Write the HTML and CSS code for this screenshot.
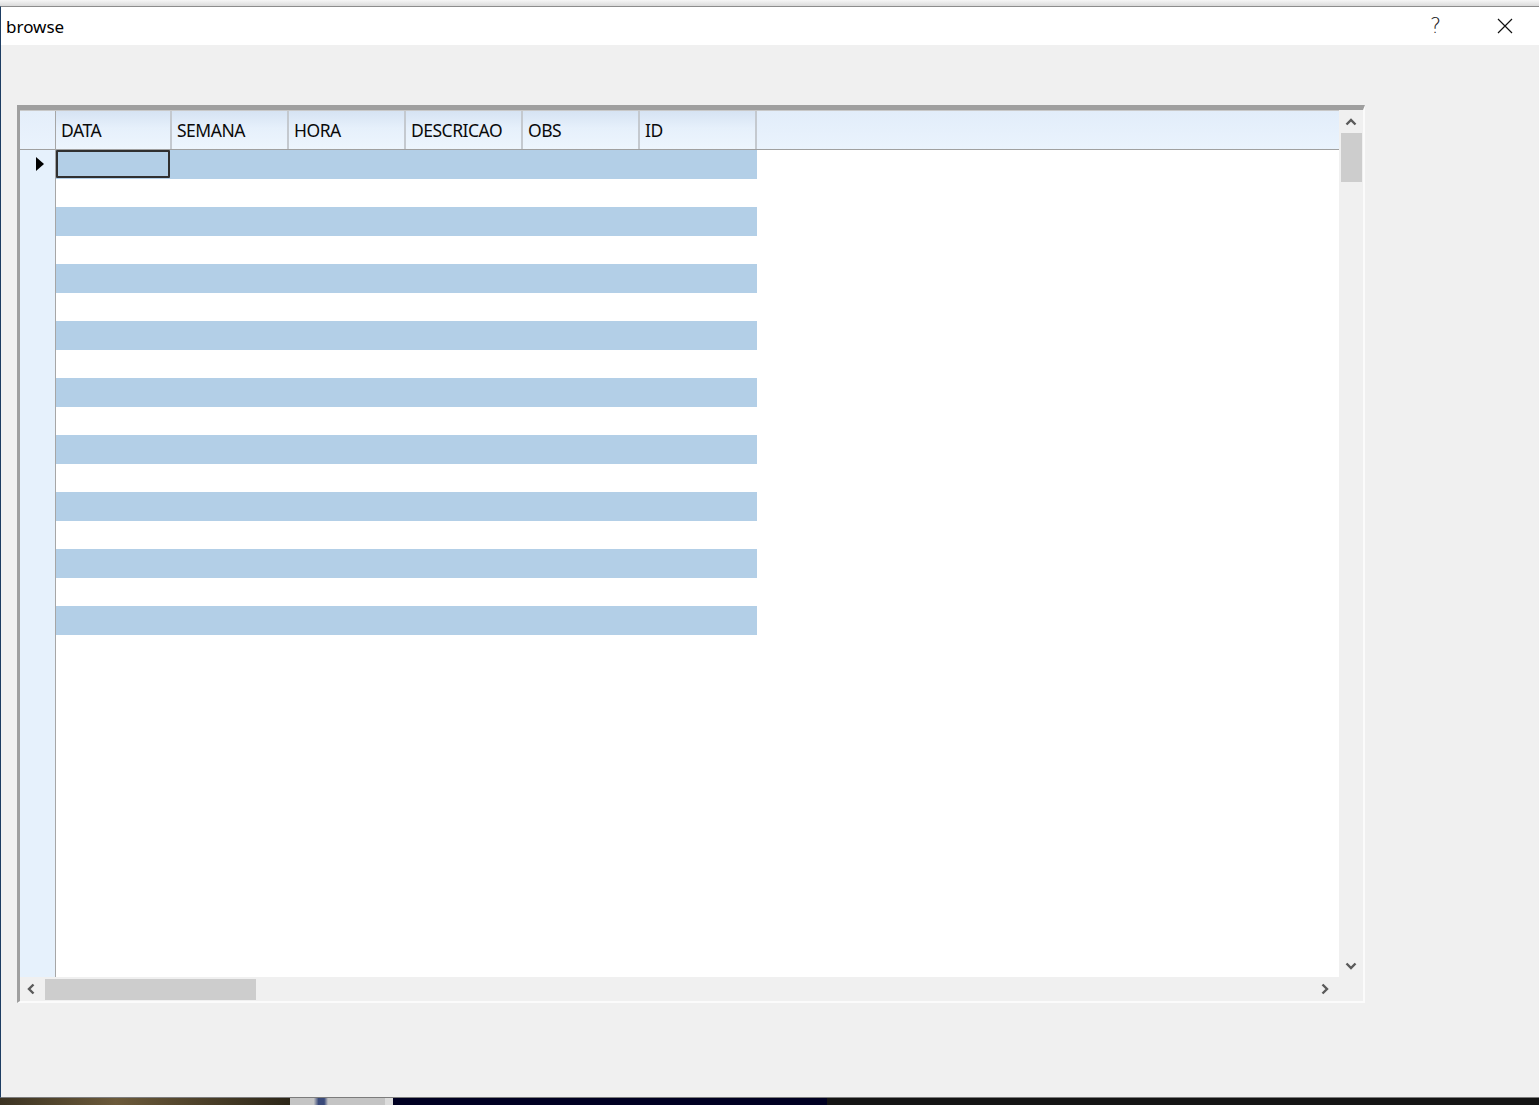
FILE: index.html
```html
<!DOCTYPE html>
<html lang="pt">
<head>
  <meta charset="UTF-8" />
  <title>browse</title>
  <link rel="stylesheet" href="styles.css">
</head>
<body>
  <div class="desk-strip"></div>

  <div class="window">
    <div class="titlebar">
      <span class="title">browse</span>
      <div class="caption-buttons">
        <span class="cap-btn help">?</span>
        <span class="cap-btn close">
          <svg width="16" height="16" viewBox="0 0 16 16"><path d="M1 1 L15 15 M15 1 L1 15" stroke="#111" stroke-width="1.2" fill="none"/></svg>
        </span>
      </div>
    </div>

    <div class="client">
      <div class="grid">
        <div class="grid-body">
          <div class="row-headers">
            <div class="corner"></div>
            <div class="current-marker">
              <svg width="10" height="16" viewBox="0 0 10 16"><path d="M1 1 L9 8 L1 15 Z" fill="#000"/></svg>
            </div>
          </div>
          <div class="cells">
            <div class="col-headers">
              <div class="col-head">DATA</div>
              <div class="col-head">SEMANA</div>
              <div class="col-head">HORA</div>
              <div class="col-head">DESCRICAO</div>
              <div class="col-head">OBS</div>
              <div class="col-head">ID</div>
            </div>
            <div class="rows" id="rows"></div>
          </div>
        </div>

        <!-- vertical scrollbar -->
        <div class="vscroll">
          <span class="arrow">
            <svg width="12" height="8" viewBox="0 0 12 8"><path d="M1.5 6.5 L6 2 L10.5 6.5" stroke="#5a5a5a" stroke-width="2.4" fill="none"/></svg>
          </span>
          <div class="vthumb"></div>
          <div class="track"></div>
          <span class="arrow">
            <svg width="12" height="8" viewBox="0 0 12 8"><path d="M1.5 1.5 L6 6 L10.5 1.5" stroke="#5a5a5a" stroke-width="2.4" fill="none"/></svg>
          </span>
        </div>

        <!-- horizontal scrollbar -->
        <div class="hscroll">
          <span class="arrow">
            <svg width="8" height="12" viewBox="0 0 8 12"><path d="M6.5 1.5 L2 6 L6.5 10.5" stroke="#5a5a5a" stroke-width="2.4" fill="none"/></svg>
          </span>
          <div class="hthumb"></div>
          <div class="track"></div>
          <span class="arrow">
            <svg width="8" height="12" viewBox="0 0 8 12"><path d="M1.5 1.5 L6 6 L1.5 10.5" stroke="#5a5a5a" stroke-width="2.4" fill="none"/></svg>
          </span>
        </div>
        <div class="scroll-corner"></div>
      </div>
    </div>
  </div>

  <div class="taskbar">
    <div class="tb-a"></div>
    <div class="tb-b"></div>
    <div class="tb-c"></div>
    <div class="tb-d"></div>
    <div class="tb-e"></div>
  </div>

  <script>
    // 18 empty records, every other one selected-blue
    const rows = document.getElementById("rows");
    for (let i = 0; i < 18; i++) {
      const row = document.createElement("div");
      row.className = i % 2 === 0 ? "row blue" : "row";
      if (i === 0) {
        const cell = document.createElement("div");
        cell.className = "current-cell";
        row.appendChild(cell);
      }
      rows.appendChild(row);
    }
  </script>
</body>
</html>
```

FILE: styles.css
```css
html, body {
  margin: 0;
  height: 1105px;
  overflow: hidden;
}

body {
  font-family: 'Noto Sans', 'Open Sans', sans-serif;
  background-color: #e9e9e9;
  color: #000;
}

.desk-strip {
  height: 6px;
  background: linear-gradient(#f6f6f6, #dadada);
}

.window {
  border-top: 1px solid #8c8c8c;
  border-left: 1px solid #1d3d63;
  border-bottom: 1px solid #7c7c7c;
  background-color: #f0f0f0;
}

.titlebar {
  height: 38px;
  background-color: #fff;
  display: flex;
  justify-content: space-between;
  align-items: center;
}

.title {
  font-size: 17px;
  padding-left: 5px;
  padding-top: 1px;
}

.caption-buttons {
  display: flex;
  height: 100%;
}

.cap-btn {
  width: 69px;
  display: flex;
  align-items: center;
  justify-content: center;
}

.help {
  font-size: 21px;
  color: #222;
  font-family: 'DejaVu Sans', sans-serif;
  font-weight: 300;
}

.client {
  height: 1052px;
  padding: 60px 0 0 16px;
  box-sizing: border-box;
}

.grid {
  width: 1348px;
  height: 898px;
  box-sizing: border-box;
  border-style: solid;
  border-width: 5px 2px 2px 3px;
  border-color: #9f9f9f #fbfbfb #fbfbfb #9f9f9f;
  display: grid;
  grid-template-columns: 1fr 24px;
  grid-template-rows: 1fr 24px;
  background-color: #fff;
}

.grid-body {
  display: flex;
  overflow: hidden;
  border-top: 1px solid #c8c8c8;
}

.row-headers {
  width: 35px;
  background-color: #e6f1fc;
  border-right: 1px solid #a6a6a6;
  flex-shrink: 0;
}

.corner {
  height: 38px;
  border-bottom: 1px solid #a0a0a0;
  background: linear-gradient(#e4eefa, #eaf3fd);
}

.current-marker {
  height: 28px;
  display: flex;
  align-items: center;
  justify-content: center;
  padding-left: 4px;
}

.cells {
  flex: 1;
}

.col-headers {
  display: flex;
  height: 38px;
  border-bottom: 1px solid #a0a0a0;
  background: linear-gradient(#e2edfa, #eaf3fd);
}

.col-head {
  width: 110px;
  height: 100%;
  border-right: 2px solid #c4c9cf;
  display: flex;
  align-items: center;
  padding-left: 5px;
  box-sizing: content-box;
  font-size: 17.5px;
  color: #0a0a0a;
  letter-spacing: -0.5px;
  background: linear-gradient(#d6e3f3, #e6f0fb 45%, #edf5fd);
}

.col-head:first-child {
  width: 109px;
}

.rows {
  width: 701px;
}

.row {
  height: 28.5px;
}

.row.blue {
  background-color: #b3cfe7;
}

.current-cell {
  width: 114px;
  height: 28px;
  box-sizing: border-box;
  border: 2px solid #303030;
  border-radius: 1px;
}

.vscroll {
  background-color: #f0f0f0;
  display: flex;
  flex-direction: column;
  align-items: center;
}

.vscroll .arrow {
  height: 23px;
  display: flex;
  align-items: center;
  justify-content: center;
}

.vthumb {
  width: 21px;
  height: 49px;
  background-color: #cdcdcd;
}

.track {
  flex: 1;
}

.hscroll {
  background-color: #f0f0f0;
  display: flex;
  align-items: center;
}

.hscroll .arrow {
  width: 22px;
  height: 100%;
  padding-right: 3px;
  display: flex;
  align-items: center;
  justify-content: center;
}

.hthumb {
  width: 211px;
  height: 21px;
  background-color: #cdcdcd;
}

.scroll-corner {
  background-color: #f0f0f0;
}

.taskbar {
  display: flex;
  height: 8px;
}

.tb-a {
  width: 290px;
  background: linear-gradient(90deg, #3b3322, #6c5a3a 40%, #2c2618);
}

.tb-b {
  width: 95px;
  background: linear-gradient(90deg, #c4c4c4 25%, #3a4a7a 30%, #3a4a7a 36%, #c4c4c4 40%);
}

.tb-c {
  width: 8px;
  background-color: #dcdcdc;
}

.tb-d {
  width: 434px;
  background-color: #000022;
}

.tb-e {
  flex: 1;
  background-color: #141414;
}
```
